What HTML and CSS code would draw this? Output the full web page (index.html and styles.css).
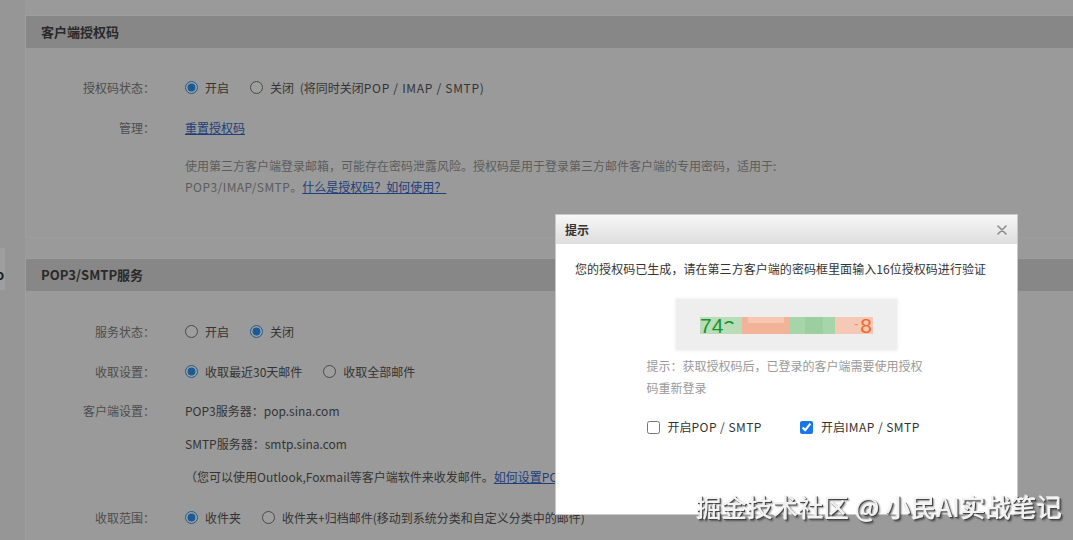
FILE: index.html
```html
<!DOCTYPE html>
<html lang="zh-CN">
<head>
<meta charset="utf-8">
<title>客户端授权码</title>
<link rel="stylesheet" href="styles.css">
</head>
<body>
<div class="page">
  <aside class="sidebar"><div class="side-item">o</div></aside>
  <main class="main">
    <section class="panel">
      <header class="panel-head">客户端授权码</header>
      <div class="panel-body body-auth">
        <div class="row">
          <div class="label">授权码状态：</div>
          <div class="value">
            <label class="opt"><input type="radio" name="auth" checked><span>开启</span></label>
            <label class="opt"><input type="radio" name="auth"><span>关闭 <span class="paren">(将同时关闭<span class="caps">POP / IMAP / SMTP</span>)</span></span></label>
          </div>
        </div>
        <div class="row">
          <div class="label">管理：</div>
          <div class="value"><a class="link" href="#">重置授权码</a></div>
        </div>
        <p class="desc">使用第三方客户端登录邮箱，可能存在密码泄露风险。授权码是用于登录第三方邮件客户端的专用密码，适用于:<br><span class="caps">POP3/IMAP/SMTP</span>。<a class="link" href="#">什么是授权码？如何使用？</a></p>
      </div>
    </section>

    <section class="panel">
      <header class="panel-head">POP3/SMTP服务</header>
      <div class="panel-body body-pop">
        <div class="row">
          <div class="label">服务状态：</div>
          <div class="value">
            <label class="opt"><input type="radio" name="svc"><span>开启</span></label>
            <label class="opt"><input type="radio" name="svc" checked><span>关闭</span></label>
          </div>
        </div>
        <div class="row">
          <div class="label">收取设置：</div>
          <div class="value">
            <label class="opt"><input type="radio" name="fetch" checked><span>收取最近30天邮件</span></label>
            <label class="opt"><input type="radio" name="fetch"><span>收取全部邮件</span></label>
          </div>
        </div>
        <div class="row multi">
          <div class="label">客户端设置：</div>
          <div class="value lines">
            <div>POP3服务器：pop.sina.com</div>
            <div>SMTP服务器：smtp.sina.com</div>
            <div>（您可以使用Outlook,Foxmail等客户端软件来收发邮件。<a class="link" href="#">如何设置POP3/SMTP？</a>）</div>
          </div>
        </div>
        <div class="row">
          <div class="label">收取范围：</div>
          <div class="value">
            <label class="opt"><input type="radio" name="scope" checked><span>收件夹</span></label>
            <label class="opt"><input type="radio" name="scope"><span>收件夹+归档邮件(移动到系统分类和自定义分类中的邮件)</span></label>
          </div>
        </div>
      </div>
    </section>
  </main>
</div>

<div class="mask"></div>

<div class="dialog">
  <div class="dialog-head">
    <span class="dialog-title">提示</span>
    <button class="close" type="button" aria-label="关闭">
      <svg width="10" height="10" viewBox="0 0 10 10"><path d="M1 1L9 9M9 1L1 9" stroke="#8c8c8c" stroke-width="1.6" stroke-linecap="round"/></svg>
    </button>
  </div>
  <div class="dialog-body">
    <p class="msg">您的授权码已生成，请在第三方客户端的密码框里面输入16位授权码进行验证</p>
    <div class="code-box">
      <div class="mosaic">
        <span class="tile t1"><span class="digits">74<span class="partial">3</span></span></span>
        <span class="tile t2"><span class="t2-top"></span></span>
        <span class="tile t3"><span class="t3-mid"></span></span>
        <span class="tile t4"><span class="digits orange"><span class="dash">-</span>8</span></span>
      </div>
    </div>
    <p class="hint">提示：获取授权码后，已登录的客户端需要使用授权码重新登录</p>
    <div class="checks">
      <label class="chk"><input type="checkbox"><span>开启<span class="caps">POP / SMTP</span></span></label>
      <label class="chk"><input type="checkbox" checked><span>开启<span class="caps">IMAP / SMTP</span></span></label>
    </div>
  </div>
</div>

<div class="watermark">掘金技术社区 @ 小民AI实战笔记</div>
</body>
</html>
```

FILE: styles.css
```css
* { box-sizing: border-box; }
html, body { margin: 0; padding: 0; }
body {
  width: 1073px;
  height: 540px;
  overflow: hidden;
  position: relative;
  background: #f8f8f8;
  font-family: "Noto Sans CJK SC", "Noto Sans", sans-serif;
  font-size: 12px;
  color: #555;
}
.caps { letter-spacing: 0.45px; }
.page { display: flex; height: 100%; }
.sidebar { width: 25px; flex: none; background: #f2f2f2; }
.side-item {
  margin-top: 248px;
  width: 5px;
  height: 42px;
  background: #ffffff;
  overflow: hidden;
  font-weight: bold;
  font-size: 13px;
  line-height: 54px;
  color: #333;
  text-indent: -4px;
  white-space: nowrap;
}
.main {
  flex: 1;
  min-width: 0;
  padding-top: 15px;
  display: flex;
  flex-direction: column;
  gap: 20px;
}
.panel {
  width: 1100px;
  background: #f9f9f9;
  border: 1px solid #ffffff;
  border-right: none;
}
.panel-head {
  height: 32px;
  line-height: 32px;
  padding-left: 15px;
  background: #dadada;
  font-size: 13px;
  font-weight: bold;
  color: #444;
}
.body-auth { padding: 19px 0 40px; }
.body-pop { padding: 20px 0 40px; }
.row { display: flex; align-items: center; min-height: 40px; }
.row.multi { align-items: flex-start; padding: 3px 0 4px; }
.row.multi .label { line-height: 33px; }
.label {
  width: 129px;
  flex: none;
  text-align: right;
  color: #7d7d7d;
}
.value { margin-left: 30px; display: flex; align-items: center; color: #555; }
.value.lines { flex-direction: column; align-items: flex-start; line-height: 33px; }
.opt { display: inline-flex; align-items: center; margin-right: 21px; }
.opt input {
  width: 13px;
  height: 13px;
  margin: 0 7px 0 0;
  accent-color: #2b93ee;
}
.paren { margin-left: 3px; }
.paren .caps { letter-spacing: 0.7px; }
.link { color: #3266c8; text-decoration: underline; }
.desc {
  margin: 8px 0 0 159px;
  width: 600px;
  line-height: 21px;
  color: #969696;
}

.mask {
  position: fixed;
  inset: 0;
  background: rgba(0, 0, 0, 0.38);
}

.dialog {
  position: absolute;
  left: 555px;
  top: 214px;
  width: 463px;
  height: 301px;
  background: #fff;
  border: 1px solid #c9c9c9;
  color: #333;
}
.dialog-head {
  height: 29px;
  background: linear-gradient(#f7f7f7, #dddddd);
  display: flex;
  align-items: center;
  justify-content: space-between;
  padding: 0 10px 0 9px;
}
.dialog-title { font-size: 12px; font-weight: bold; color: #333; }
.close {
  border: 0;
  background: none;
  padding: 0;
  width: 10px;
  height: 10px;
  display: flex;
}
.dialog-body { padding: 15px 19px 0; }
.msg { margin: 0; line-height: 20px; letter-spacing: 0.05px; }
.code-box {
  width: 221px;
  height: 51px;
  margin: 20px auto 0;
  background: #eeeeee;
  box-shadow: 0 0 3px 1px #f1f1f1;
  padding: 18px 0 0 24px;
}
.mosaic { display: flex; width: 173px; height: 17px; }
.tile { height: 17px; position: relative; overflow: visible; }
.t1 { width: 42px; background: #b9ddb9; }
.t2 { width: 48px; background: #f3b399; }
.t2-top { position: absolute; left: 6px; top: 0; width: 36px; height: 6px; background: #f7c7b3; }
.t3 { width: 45px; background: #a6d5aa; }
.t3-mid { position: absolute; left: 15px; top: 0; width: 18px; height: 17px; background: #9bcf9f; }
.t4 { width: 38px; background: #f6c8b6; }
.digits {
  position: absolute;
  left: 0;
  bottom: -2px;
  font-family: "Liberation Sans", sans-serif;
  font-size: 21px;
  line-height: 21px;
  color: #1a9327;
}
.partial {
  display: inline-block;
  height: 7px;
  overflow: hidden;
  vertical-align: top;
  margin-top: 2px;
  line-height: 21px;
}
.digits.orange { left: auto; right: 1px; color: #ef6a2e; }
.dash { font-size: 12px; vertical-align: 5px; color: #f08a5e; margin-right: 2px; }
.hint {
  width: 280px;
  margin: 5px auto 0;
  line-height: 22px;
  color: #999;
}
.checks {
  width: 280px;
  margin: 17px auto 0;
  display: flex;
  gap: 38px;
  line-height: 22px;
}
.chk { display: inline-flex; align-items: center; }
.chk input {
  width: 13px;
  height: 13px;
  margin: 0 8px 0 0;
  accent-color: #1877e6;
}

.watermark {
  position: absolute;
  left: 696px;
  top: 490px;
  font-size: 25.5px;
  font-weight: 500;
  line-height: 32px;
  white-space: nowrap;
  color: #f2f2f2;
  text-shadow: 1px 1px 0 #444, 2px 2px 2px rgba(0, 0, 0, 0.45), -1px -1px 0 rgba(255, 255, 255, 0.6);
}
```
